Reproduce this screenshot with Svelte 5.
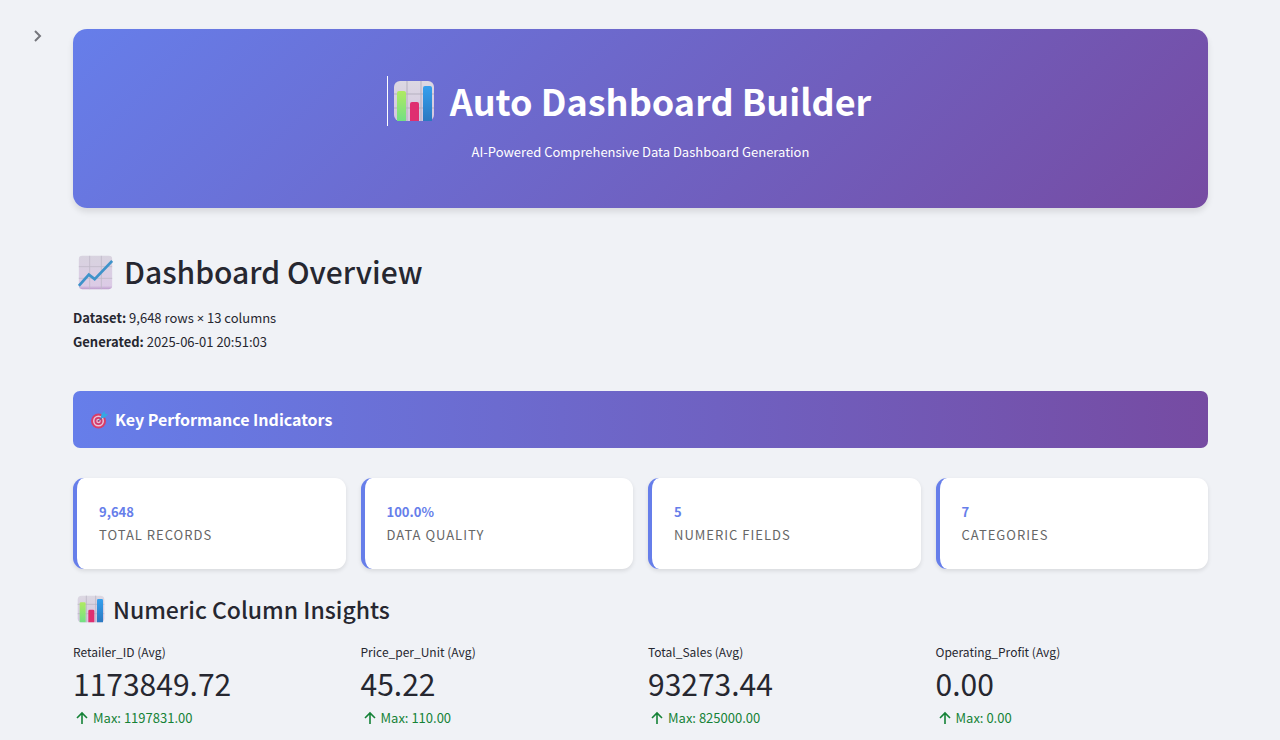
<script lang="ts">
  type Card = { value: string; label: string };
  type Metric = { label: string; value: string; max: string };

  const cards: Card[] = [
    { value: '9,648', label: 'Total Records' },
    { value: '100.0%', label: 'Data Quality' },
    { value: '5', label: 'Numeric Fields' },
    { value: '7', label: 'Categories' },
  ];

  const metrics: Metric[] = [
    { label: 'Retailer_ID (Avg)', value: '1173849.72', max: '1197831.00' },
    { label: 'Price_per_Unit (Avg)', value: '45.22', max: '110.00' },
    { label: 'Total_Sales (Avg)', value: '93273.44', max: '825000.00' },
    { label: 'Operating_Profit (Avg)', value: '0.00', max: '0.00' },
  ];

  let sidebarOpen = $state(false);
</script>

{#snippet barChart()}
  <svg class="emoji" viewBox="0 0 42 42" aria-hidden="true">
    <defs>
      <linearGradient id="bar-green" x1="0" y1="0" x2="0" y2="1">
        <stop offset="0" stop-color="#b0ea62" />
        <stop offset="1" stop-color="#72e084" />
      </linearGradient>
      <linearGradient id="bar-blue" x1="0" y1="0" x2="0" y2="1">
        <stop offset="0" stop-color="#35a0ee" />
        <stop offset="1" stop-color="#2b78c0" />
      </linearGradient>
      <linearGradient id="bar-paper" x1="0" y1="0" x2="0" y2="1">
        <stop offset="0" stop-color="#dcd8e2" />
        <stop offset="1" stop-color="#d4c6e0" />
      </linearGradient>
    </defs>
    <rect x="1" y="1" width="40" height="40" rx="6" fill="url(#bar-paper)" />
    <path d="M14 1v40M28 1v40M1 14h40M1 28h40" stroke="#b5b0bf" stroke-width="1" />
    <path d="M4 41V13q0-2 2-2h5q2 0 2 2v28z" fill="url(#bar-green)" />
    <path d="M17 41V24q0-2 2-2h5q2 0 2 2v17z" fill="#df2f70" />
    <path d="M30 41V8q0-2 2-2h5q2 0 2 2v33z" fill="url(#bar-blue)" />
  </svg>
{/snippet}

{#snippet lineChart()}
  <svg class="emoji" viewBox="0 0 42 42" aria-hidden="true">
    <defs>
      <linearGradient id="line-paper" x1="0" y1="0" x2="0" y2="1">
        <stop offset="0" stop-color="#d8d3df" />
        <stop offset="0.9" stop-color="#dccbe6" />
        <stop offset="1" stop-color="#bd9ccc" />
      </linearGradient>
    </defs>
    <rect x="1" y="1" width="40" height="40" rx="4" fill="url(#line-paper)" />
    <path d="M14 1v40M28 1v40M1 14h40M1 28h40" stroke="#bfb9c8" stroke-width="1" />
    <path d="M1 37L13 23.500L20 29L41 7" fill="none" stroke="#3e93ca" stroke-width="3.200" />
  </svg>
{/snippet}

<div class="page">
  <aside>
    <button
      class="expand"
      aria-label="Toggle sidebar"
      aria-expanded={sidebarOpen}
      onclick={() => (sidebarOpen = !sidebarOpen)}
    >
      <svg viewBox="0 0 20 20" aria-hidden="true">
        <path d="M7 5l5 5-5 5" fill="none" stroke="currentColor" stroke-width="2" />
      </svg>
    </button>
  </aside>

  <main>
    <header class="hero">
      <h1>{@render barChart()}<span>Auto Dashboard Builder</span></h1>
      <p>AI-Powered Comprehensive Data Dashboard Generation</p>
    </header>

    <section class="overview">
      <h2>{@render lineChart()}<span>Dashboard Overview</span></h2>
      <p><strong>Dataset:</strong> 9,648 rows <span class="times">×</span> 13 columns</p>
      <p><strong>Generated:</strong> 2025-06-01 20:51:03</p>
    </section>

    <h3 class="banner">
      <svg class="emoji" viewBox="0 0 36 36" aria-hidden="true">
        <circle cx="17" cy="20" r="15" fill="#d93d68" />
        <circle cx="17" cy="20" r="11" fill="#e7c4dc" />
        <circle cx="17" cy="20" r="8" fill="#d4386b" />
        <circle cx="17" cy="20" r="4.500" fill="#e7bfd6" />
        <circle cx="17" cy="20" r="2" fill="#cf3769" />
        <path d="M17 20L29 8" stroke="#285f9e" stroke-width="2" />
        <path d="M21 15l2-9 6-6 1 5 6 2-6 6z" fill="#35a6e3" />
      </svg>
      <span>Key Performance Indicators</span>
    </h3>

    <div class="grid">
      {#each cards as card (card.label)}
        <div class="card">
          <div class="card-value">{card.value}</div>
          <div class="card-label">{card.label}</div>
        </div>
      {/each}
    </div>

    <h3 class="insights">{@render barChart()}<span>Numeric Column Insights</span></h3>

    <div class="grid">
      {#each metrics as metric (metric.label)}
        <div class="metric">
          <div class="metric-label">{metric.label}</div>
          <div class="metric-value">{metric.value}</div>
          <div class="metric-delta">
            <svg viewBox="0 0 18 18" aria-hidden="true">
              <path d="M9 15V4M4 9l5-5 5 5" fill="none" stroke="currentColor" stroke-width="1.600" />
            </svg>
            <span>Max: {metric.max}</span>
          </div>
        </div>
      {/each}
    </div>
  </main>
</div>

<style>
  :global(body) {
    margin: 0;
    background: #f0f2f6;
  }

  .page {
    display: grid;
    grid-template-columns: 73px 1fr;
    padding-right: 72px;
    font-family: 'Noto Sans CJK SC', 'Source Sans Pro', sans-serif;
    font-size: 13px;
    line-height: 24px;
    color: #262730;
  }

  h1,
  h2,
  h3,
  p {
    margin: 0;
  }

  .emoji {
    flex: none;
  }

  .expand {
    display: flex;
    margin: 26px 0 0 28px;
    padding: 0;
    border: 0;
    background: none;
    color: #75767c;
    cursor: pointer;
  }

  .expand svg {
    width: 20px;
    height: 20px;
  }

  main {
    min-width: 0;
    padding: 29px 0 8px;
  }

  .hero {
    display: flex;
    flex-direction: column;
    align-items: center;
    padding: 47px 24px 44px;
    border-radius: 14px;
    background: linear-gradient(135deg, #667eea 0%, #764ba2 100%);
    box-shadow: 0 4px 6px rgba(0, 0, 0, 0.1);
    color: #fff;
    text-align: center;
  }

  h1 {
    display: flex;
    align-items: center;
    gap: 15px;
    margin-bottom: 14px;
    margin-right: 23px;
    padding-left: 5px;
    border-left: 1px solid #fff;
    font-size: 36px;
    line-height: 50px;
    font-weight: 700;
  }

  h1 span,
  h2 span {
    padding-bottom: 2px;
    line-height: 48px;
  }

  h1 .emoji {
    width: 42px;
    height: 42px;
  }

  .overview {
    margin: 39px 0 37px;
  }

  h2 {
    display: flex;
    align-items: center;
    gap: 11px;
    margin-bottom: 9px;
    padding-left: 5px;
    font-size: 30px;
    font-weight: 500;
  }

  h2 .emoji {
    width: 35px;
    height: 35px;
  }

  .times {
    font-family: 'Noto Sans', sans-serif;
  }

  .banner {
    display: flex;
    align-items: center;
    gap: 7px;
    margin-bottom: 30px;
    padding: 16px 17px;
    border-radius: 7px;
    background: linear-gradient(90deg, #667eea 0%, #764ba2 100%);
    color: #fff;
    font-size: 16px;
    line-height: 25px;
    font-weight: 700;
  }

  .banner .emoji {
    width: 18px;
    height: 18px;
  }

  .grid {
    display: grid;
    grid-template-columns: repeat(4, minmax(0, 1fr));
    gap: 15px;
  }

  .card {
    padding: 22px 22px 23px;
    border-left: 4px solid #667eea;
    border-radius: 11px;
    background: #fff;
    box-shadow: 0 2px 4px rgba(0, 0, 0, 0.1);
  }

  .card-value {
    color: #667eea;
    font-weight: 700;
  }

  .card-label {
    color: #666;
    line-height: 22px;
    letter-spacing: 1px;
    text-transform: uppercase;
  }

  .insights {
    display: flex;
    align-items: center;
    gap: 8px;
    margin: 23px 0 16px;
    padding-left: 4px;
    font-size: 23px;
    line-height: 34px;
    font-weight: 500;
  }

  .insights .emoji {
    width: 28px;
    height: 28px;
  }

  .metric-label {
    font-size: 12px;
    line-height: 20px;
  }

  .metric-value {
    margin-bottom: 2px;
    font-size: 30px;
    line-height: 42px;
  }

  .metric-delta {
    display: flex;
    align-items: center;
    gap: 2px;
    color: #158237;
  }

  .metric-delta svg {
    width: 18px;
    height: 18px;
  }
</style>
